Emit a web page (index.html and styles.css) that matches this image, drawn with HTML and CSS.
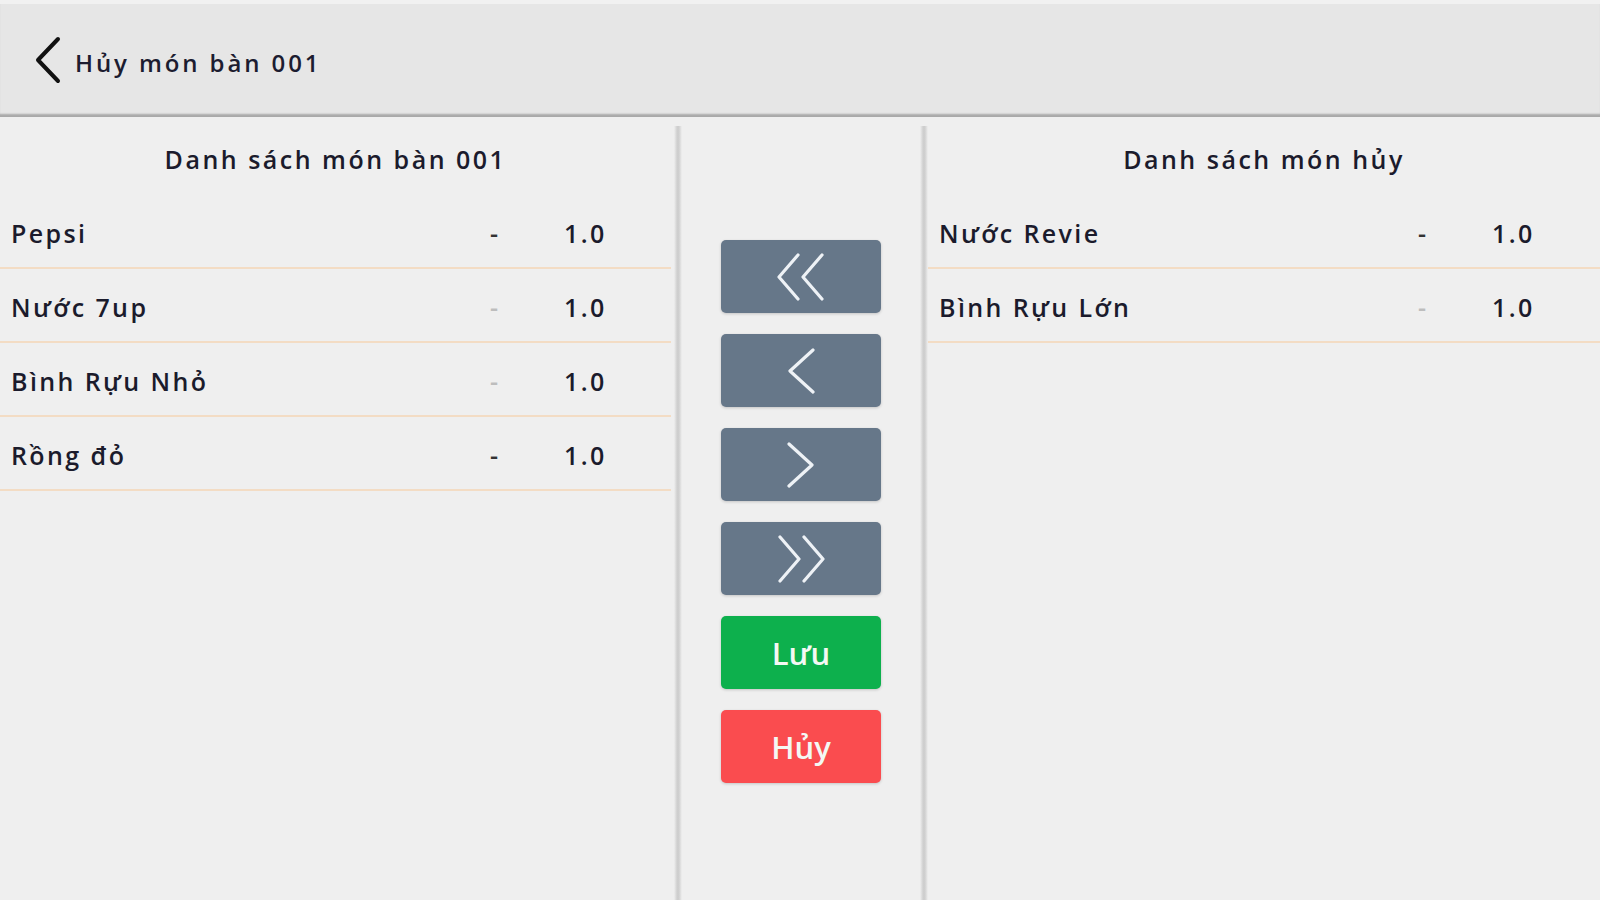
FILE: index.html
```html
<!DOCTYPE html>
<html lang="vi">
<head>
<meta charset="utf-8">
<title>Hủy món bàn 001</title>
<link rel="stylesheet" href="styles.css">
</head>
<body>
<div class="app">
  <header class="topbar">
    <svg class="back" width="30" height="48" viewBox="0 0 30 48"><path d="M25 3 L5 24 L25 45" fill="none" stroke="#111" stroke-width="4" stroke-linecap="round" stroke-linejoin="round"/></svg>
    <span class="title">Hủy món bàn 001</span>
  </header>
  <main class="content">
    <section class="panel left">
      <div class="panel-head">Danh sách món bàn 001</div>
      <div class="row"><span class="name">Pepsi</span><span class="dash">-</span><span class="qty">1.0</span></div>
      <div class="row"><span class="name">Nước 7up</span><span class="dash light">-</span><span class="qty">1.0</span></div>
      <div class="row"><span class="name">Bình Rựu Nhỏ</span><span class="dash light">-</span><span class="qty">1.0</span></div>
      <div class="row"><span class="name">Rồng đỏ</span><span class="dash">-</span><span class="qty">1.0</span></div>
    </section>
    <div class="divider"></div>
    <section class="middle">
      <button class="btn slate" type="button">
        <svg width="50" height="48" viewBox="0 0 50 48"><path d="M22 2 L3 24 L22 46 M46 2 L27 24 L46 46" fill="none" stroke="#eef2f6" stroke-width="3.2" stroke-linecap="round" stroke-linejoin="round"/></svg>
      </button>
      <button class="btn slate" type="button">
        <svg width="30" height="46" viewBox="0 0 30 46"><path d="M27 2 L4 23 L27 44" fill="none" stroke="#eef2f6" stroke-width="3.2" stroke-linecap="round" stroke-linejoin="round"/></svg>
      </button>
      <button class="btn slate" type="button">
        <svg width="30" height="46" viewBox="0 0 30 46"><path d="M3 2 L26 23 L3 44" fill="none" stroke="#eef2f6" stroke-width="3.2" stroke-linecap="round" stroke-linejoin="round"/></svg>
      </button>
      <button class="btn slate" type="button">
        <svg width="50" height="48" viewBox="0 0 50 48"><path d="M4 2 L23 24 L4 46 M28 2 L47 24 L28 46" fill="none" stroke="#eef2f6" stroke-width="3.2" stroke-linecap="round" stroke-linejoin="round"/></svg>
      </button>
      <button class="btn green" type="button">Lưu</button>
      <button class="btn red" type="button">Hủy</button>
    </section>
    <div class="divider"></div>
    <section class="panel right">
      <div class="panel-head">Danh sách món hủy</div>
      <div class="row"><span class="name">Nước Revie</span><span class="dash">-</span><span class="qty">1.0</span></div>
      <div class="row"><span class="name">Bình Rựu Lớn</span><span class="dash light">-</span><span class="qty">1.0</span></div>
    </section>
  </main>
</div>
</body>
</html>
```
FILE: styles.css
```css
* { box-sizing: border-box; }
html, body { margin: 0; padding: 0; }
body {
  width: 1600px;
  height: 900px;
  overflow: hidden;
  background: #efefef;
  font-family: "Open Sans", "Noto Sans", sans-serif;
  color: #1b1b2c;
}
.app { display: flex; flex-direction: column; height: 900px; }
.topbar {
  height: 117px;
  flex: none;
  display: flex;
  align-items: center;
  padding: 0 0 0 33px;
  background: #e6e6e6;
  border-top: 4px solid #f1f1f1;
  box-shadow: inset 0 -4px 2px -1px #a9a9a9;
}
.back { margin-right: 12px; margin-top: -2px; }
.title {
  font-size: 24px;
  font-weight: 600;
  letter-spacing: 2.9px;
  color: #1c1c30;
  margin-top: 3px;
}
.content {
  flex: 1;
  display: flex;
  padding-top: 8px;
}
.panel { display: flex; flex-direction: column; }
.panel.left { width: 674px; padding-right: 3px; }
.panel.right { flex: 1; }
.panel-head {
  height: 70px;
  display: flex;
  align-items: center;
  justify-content: center;
  padding-bottom: 3px;
  font-size: 25px;
  font-weight: 600;
  letter-spacing: 2.5px;
}
.row {
  height: 74px;
  display: grid;
  grid-template-columns: 479px 74px auto;
  align-items: center;
  padding-left: 11px;
  padding-top: 3px;
  border-bottom: 2px solid #f3dcc4;
  font-size: 25px;
  font-weight: 600;
  letter-spacing: 2.4px;
}
.dash { color: #333; }
.dash.light { color: #bdbdbd; }
.divider {
  width: 8px;
  flex: none;
  margin-top: 1px;
  background: linear-gradient(to right, #efefef 0%, #d6d6d6 30%, #cbcbcb 50%, #d6d6d6 70%, #efefef 100%);
}
.middle {
  width: 238px;
  flex: none;
  display: flex;
  flex-direction: column;
  align-items: center;
  gap: 21px;
  padding-top: 115px;
  background: #efefef;
}
.btn {
  width: 160px;
  height: 73px;
  border: none;
  border-radius: 5px;
  display: flex;
  align-items: center;
  justify-content: center;
  box-shadow: 0 1px 3px rgba(0,0,0,0.18);
  font-family: "Open Sans", sans-serif;
  font-size: 31px;
  font-weight: 600;
  color: #f4f8f4;
  padding: 0;
}
.slate { background: #667789; }
.green { background: #0db04d; }
.red { background: #fa4c4f; }
```
